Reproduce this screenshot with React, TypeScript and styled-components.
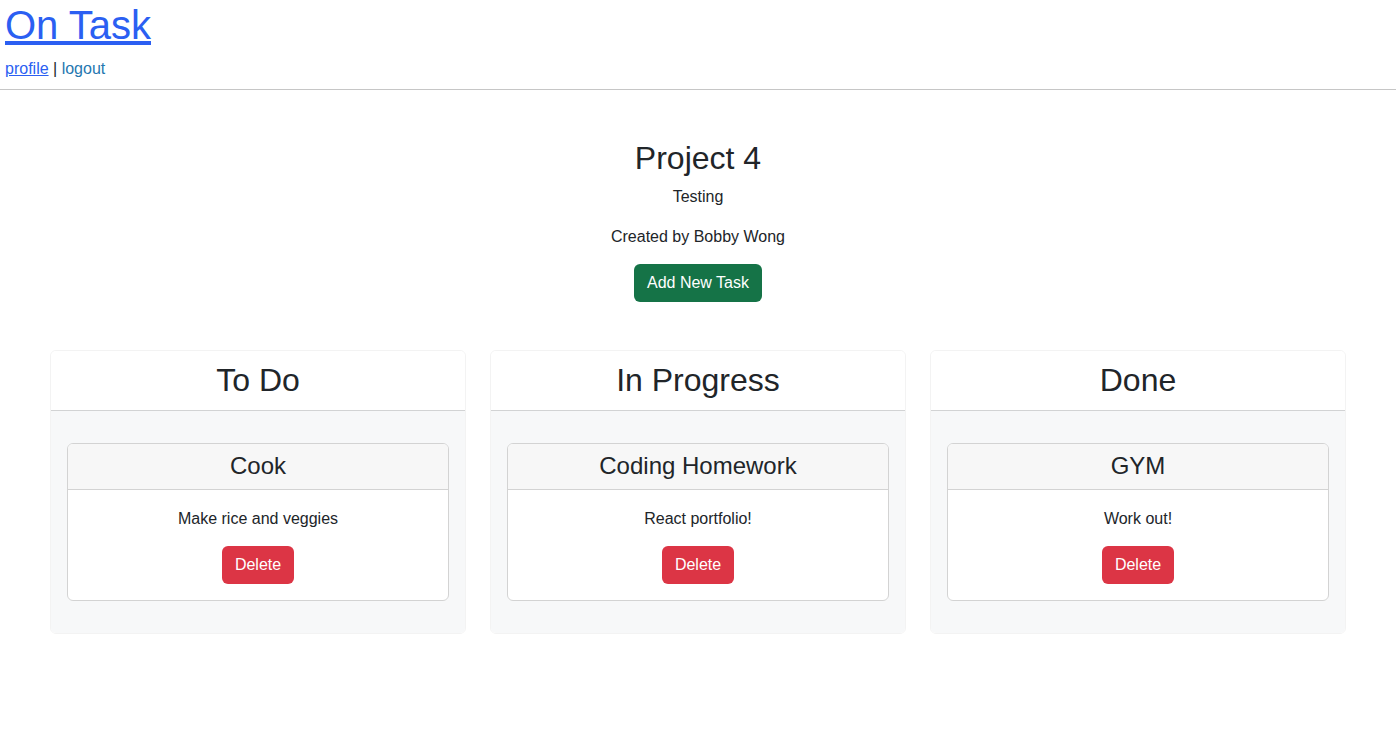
import React from "react";
import styled, { createGlobalStyle } from "styled-components";

const GlobalStyle = createGlobalStyle`
	body {
		margin: 0;
		font-family: "Liberation Sans", Arial, sans-serif;
		font-size: 16px;
		line-height: 1.5;
		color: #212529;
		background: #ffffff;
	}

	* {
		box-sizing: border-box;
	}
`;

const Header = styled.header`
	padding: 1px 5px 8px;
	border-bottom: 1px solid #c6c6c6;
`;

const Brand = styled.h1`
	margin: 0 0 8px;
	font-size: 40px;
	font-weight: 400;
	line-height: 1.2;

	a {
		color: #2b5ff2;
		text-decoration: underline;
	}
`;

const NavLinks = styled.nav`
	line-height: 24px;
	color: #212529;
`;

const NavLink = styled.a<{ $plain?: boolean }>`
	color: ${(p) => (p.$plain ? "#2577b0" : "#2b5ff2")};
	text-decoration: ${(p) => (p.$plain ? "none" : "underline")};
`;

const Main = styled.main`
	max-width: 1320px;
	margin: 0 auto;
	padding: 49px 12px 0;
`;

const ProjectInfo = styled.section`
	display: flex;
	flex-direction: column;
	align-items: center;
	text-align: center;
`;

const ProjectTitle = styled.h2`
	margin: 0 0 8px;
	font-size: 32px;
	font-weight: 400;
	line-height: 1.2;
`;

const Text = styled.p<{ $gap?: number }>`
	margin: 0 0 ${(p) => p.$gap ?? 16}px;
`;

const Button = styled.button<{ $variant: "success" | "danger" }>`
	display: inline-block;
	padding: 6px 12px;
	border: 1px solid transparent;
	border-radius: 6px;
	font-family: inherit;
	font-size: 16px;
	line-height: 24px;
	color: #ffffff;
	background: ${(p) => (p.$variant === "success" ? "#157347" : "#dc3545")};
	cursor: pointer;
`;

const Board = styled.section`
	display: grid;
	grid-template-columns: repeat(3, 1fr);
	gap: 24px;
	margin-top: 48px;
`;

const Column = styled.div`
	border: 1px solid #f3f3f3;
	border-radius: 6px;
	overflow: hidden;
`;

const ColumnHeader = styled.div`
	padding: 10px 16px 11px;
	background: #ffffff;
	border-bottom: 1px solid #d2d3d4;
	text-align: center;

	h2 {
		margin: 0;
		font-size: 32px;
		font-weight: 400;
		line-height: 38px;
	}
`;

const ColumnBody = styled.div`
	padding: 32px 16px;
	background: #f7f8f9;
`;

const TaskCard = styled.div`
	border: 1px solid #d3d3d3;
	border-radius: 6px;
	background: #ffffff;
	overflow: hidden;
	text-align: center;
`;

const TaskHeader = styled.div`
	padding: 8px 16px;
	background: #f7f7f7;
	border-bottom: 1px solid #d3d3d3;

	h4 {
		margin: 0;
		font-size: 24px;
		font-weight: 400;
		line-height: 28.8px;
	}
`;

const TaskBody = styled.div`
	padding: 17px 16px 16px;
`;

type Task = { title: string; description: string };

const columns: { name: string; tasks: Task[] }[] = [
	{ name: "To Do", tasks: [{ title: "Cook", description: "Make rice and veggies" }] },
	{ name: "In Progress", tasks: [{ title: "Coding Homework", description: "React portfolio!" }] },
	{ name: "Done", tasks: [{ title: "GYM", description: "Work out!" }] },
];

const TaskItem = ({ task }: { task: Task }) => (
	<TaskCard>
		<TaskHeader>
			<h4>{task.title}</h4>
		</TaskHeader>
		<TaskBody>
			<Text $gap={15}>{task.description}</Text>
			<Button $variant="danger">Delete</Button>
		</TaskBody>
	</TaskCard>
);

const App = () => {
	return (
		<>
			<GlobalStyle />
			<Header>
				<Brand>
					<a href="#">On Task</a>
				</Brand>
				<NavLinks>
					<NavLink href="#">profile</NavLink> | <NavLink href="#" $plain>logout</NavLink>
				</NavLinks>
			</Header>
			<Main>
				<ProjectInfo>
					<ProjectTitle>Project 4</ProjectTitle>
					<Text>Testing</Text>
					<Text $gap={15}>Created by Bobby Wong</Text>
					<Button $variant="success">Add New Task</Button>
				</ProjectInfo>
				<Board>
					{columns.map((column) => (
						<Column key={column.name}>
							<ColumnHeader>
								<h2>{column.name}</h2>
							</ColumnHeader>
							<ColumnBody>
								{column.tasks.map((task) => (
									<TaskItem key={task.title} task={task} />
								))}
							</ColumnBody>
						</Column>
					))}
				</Board>
			</Main>
		</>
	);
};

export default App;
